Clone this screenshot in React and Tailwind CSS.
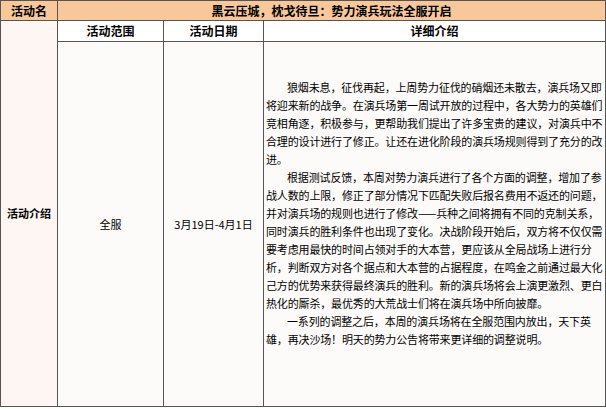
export default function App() {
  const p1 = "狼烟未息，征伐再起，上周势力征伐的硝烟还未散去，演兵场又即将迎来新的战争。在演兵场第一周试开放的过程中，各大势力的英雄们竞相角逐，积极参与，更帮助我们提出了许多宝贵的建议，对演兵中不合理的设计进行了修正。让还在进化阶段的演兵场规则得到了充分的改进。";
  const p2 = "根据测试反馈，本周对势力演兵进行了各个方面的调整，增加了参战人数的上限，修正了部分情况下匹配失败后报名费用不返还的问题，并对演兵场的规则也进行了修改——兵种之间将拥有不同的克制关系，同时演兵的胜利条件也出现了变化。决战阶段开始后，双方将不仅仅需要考虑用最快的时间占领对手的大本营，更应该从全局战场上进行分析，判断双方对各个据点和大本营的占据程度，在鸣金之前通过最大化己方的优势来获得最终演兵的胜利。新的演兵场将会上演更激烈、更白热化的厮杀，最优秀的大荒战士们将在演兵场中所向披靡。";
  const p3 = "一系列的调整之后，本周的演兵场将在全服范围内放出，天下英雄，再决沙场！明天的势力公告将带来更详细的调整说明。";
  return (
    <div className="w-[606px] h-[409px] bg-white text-[11px] text-black" style={{ fontFamily: '"Noto Sans CJK SC", "Noto Sans", sans-serif' }}>
      <div className="flex h-[21px] border border-[#555] bg-[#f8c79a] font-bold text-[12px]">
        <div className="w-[57px] shrink-0 border-r border-[#555] flex items-center justify-center">活动名</div>
        <div className="flex-1 flex items-center justify-center">黑云压城，枕戈待旦：势力演兵玩法全服开启</div>
      </div>
      <div className="flex h-[386px] border-x border-b border-[#555]">
        <div className="w-[57px] shrink-0 border-r border-[#555] bg-[#fdf6f3] flex items-center justify-center font-bold">活动介绍</div>
        <div className="flex-1 flex flex-col">
          <div className="flex h-[21px] border-b border-[#555] font-bold text-[12px]">
            <div className="w-[106px] border-r border-[#555] flex items-center justify-center">活动范围</div>
            <div className="w-[100px] border-r border-[#555] flex items-center justify-center">活动日期</div>
            <div className="flex-1 flex items-center justify-center">详细介绍</div>
          </div>
          <div className="flex flex-1 bg-[#fdfbf9]">
            <div className="w-[106px] border-r border-[#555] flex items-center justify-center">全服</div>
            <div className="w-[100px] border-r border-[#555] flex items-center justify-center">3月19日-4月1日</div>
            <div className="flex-1 flex flex-col justify-center pl-[2px] pr-[1px] pb-[22px] leading-[18px] tracking-[-0.15px]">
              <p className="indent-[21px]">{p1}</p>
              <p className="indent-[21px]">{p2}</p>
              <p className="indent-[21px]">{p3}</p>
            </div>
          </div>
        </div>
      </div>
    </div>
  );
}
